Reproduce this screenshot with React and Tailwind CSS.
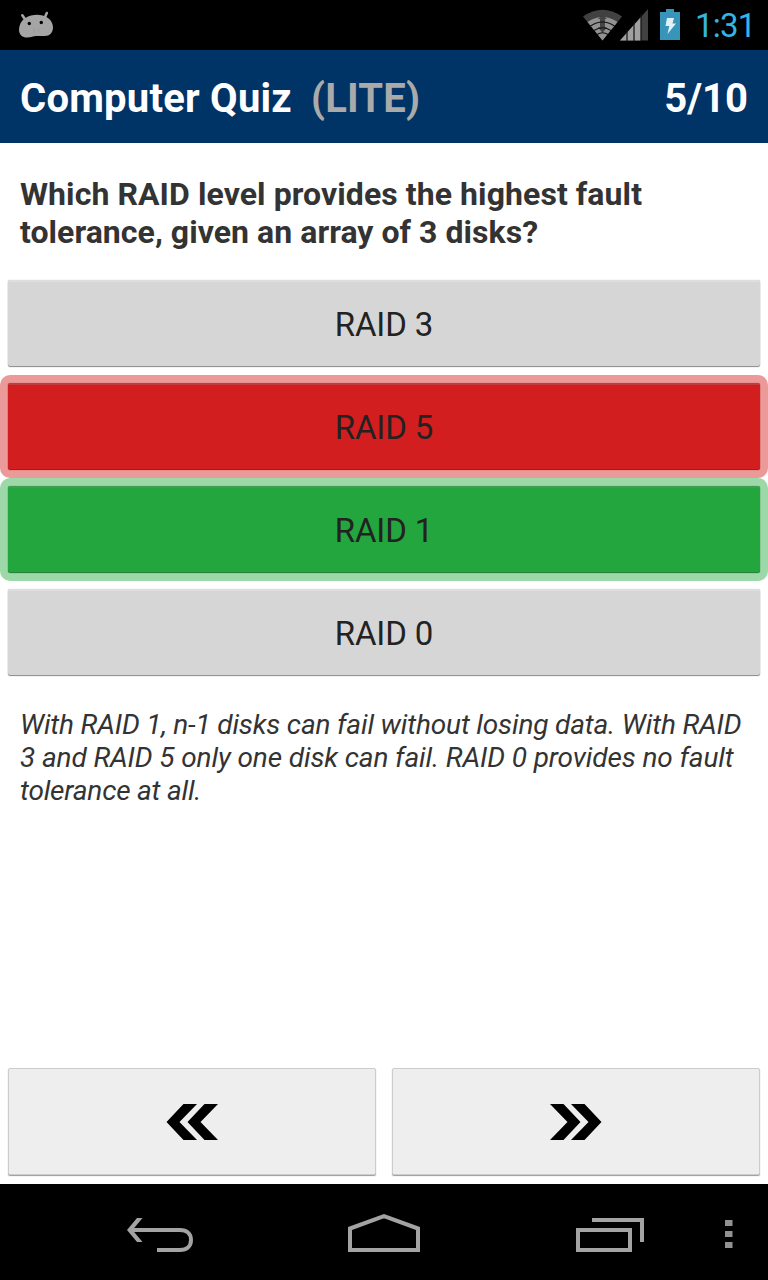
import React from "react";

function StatusBar() {
  return (
    <header className="flex h-[50px] shrink-0 items-start justify-between bg-black">
      <svg className="ml-[18px] mt-[10px]" width="36" height="30" viewBox="18 10 36 30" fill="#a5a5a5">
        <path d="M22.3 15.3 25.5 20M46.8 13 44.6 18" stroke="#a5a5a5" strokeWidth="2.600" strokeLinecap="round" />
        <path d="M25 18.2C29 15.5 33 14.8 37 14.8C41 14.8 44.5 15.6 48 18C51.5 20.5 53 24 53 27.5C53 32.5 49.5 36 45 36H36C33.5 36 31 37.6 27 37.6C22.5 37.6 19 34.5 19 30C19 25 21 21 25 18.2Z" />
        <circle cx="29.3" cy="23.5" r="1.7" fill="#000" />
        <circle cx="41.3" cy="22.5" r="1.7" fill="#000" />
        <path d="M34 28.5v4M38.500 28.500v3" stroke="#999" strokeWidth="1" />
      </svg>
      <div className="flex h-[50px] items-start">
        <svg width="102" height="50" viewBox="582 0 102 50">
          <path d="M583 16.500Q602.500 3 622 16.500L602.500 40.500Z" fill="#414141" />
          <path d="M587.500 22Q602.500 12 617.500 22L602.500 40.500Z" fill="#929292" />
          <path d="M602.500 14.500 607 19H605V27H607L602.500 33 598 27H600V19H598Z" fill="#3d3d3d" opacity=".9" />
          <g fill="none" stroke="#101010" strokeWidth="1.100">
            <path d="M590.500 26Q602.500 18 614.500 26" />
            <path d="M594 30.500Q602.500 25 611 30.500" />
            <path d="M597 34.500Q602.500 31 608 34.500" />
          </g>
          <path d="M620 40.500 648 9V40.500Z" fill="#414141" />
          <path d="M620 40.500 641 17V40.500Z" fill="#a0a0a0" />
          <path d="M627 30v11M634 22v19M641 14v27" stroke="#111" strokeWidth="1.200" />
          <path d="M666 9h8v3h6v28h-20V12h6Z" fill="#3795b9" />
          <path d="M667 18h7l-1.500 5.500h3.500L667.500 34l1.800-8h-3.800Z" fill="#e3f1f6" />
        </svg>
        <span className="ml-[11px] mt-[7px] w-[73px] whitespace-nowrap text-[33px] leading-[38px] tracking-[-0.8px] text-[#33b5e5]">1:31</span>
      </div>
    </header>
  );
}

const frames = {
  plain: "",
  wrong: "bg-[#eb9999]",
  right: "bg-[#9dd8a9]",
};

const faces = {
  plain: "bg-[#d6d6d6] border-t-[#dedede] shadow-[0_1px_1px_#888,0_0_1px_#aaa]",
  wrong: "bg-[#d21e1e] border-t-[#c33c3c] shadow-[0_1px_1px_#8c1717,0_0_1px_#b94444]",
  right: "bg-[#23a63e] border-t-[#429b52] shadow-[0_1px_1px_#1b7730,0_0_1px_#459b53]",
};

function Answer({ label, state = "plain" }) {
  return (
    <div className={`h-[103px] rounded-[10px] px-2 pt-2 pb-2 ${frames[state]}`}>
      <button className={`flex h-[86px] w-full items-center justify-center rounded-[2px] border-t-2 pt-[1px] text-[33px] leading-[38px] tracking-[-0.1px] text-[#222] ${faces[state]}`}>
        <span>{label}</span>
      </button>
    </div>
  );
}

function PagerButton({ label, children }) {
  return (
    <button aria-label={label} className="flex h-[107px] flex-1 items-center justify-center rounded-[2px] border border-[#cccccc] bg-[#eeeeee] shadow-[0_1px_1px_#999]">
      {children}
    </button>
  );
}

export default function App() {
  return (
    <div className="flex h-[1280px] w-[768px] flex-col overflow-hidden bg-white font-['Roboto',sans-serif]">
      <StatusBar />
      <div className="flex h-[93px] shrink-0 items-center justify-between bg-[#003366] px-5 pt-[3px] text-[40px] font-bold leading-[47px] text-white">
        <h1 className="flex whitespace-nowrap">
          <span className="w-[291px] tracking-[0.23px]">Computer Quiz</span>
          <span className="tracking-[0.2px] text-[#aaa]">(LITE)</span>
        </h1>
        <span>5/10</span>
      </div>

      <main className="flex flex-1 flex-col">
        <h2 className="h-[129px] px-5 pt-8 text-[32px] font-bold leading-[38px] tracking-[0.08px] text-[#333]">
          <span className="block whitespace-nowrap">Which RAID level provides the highest fault</span>
          <span className="block whitespace-nowrap tracking-[0.05px]">tolerance, given an array of 3 disks?</span>
        </h2>
        <Answer label="RAID 3" />
        <Answer label="RAID 5" state="wrong" />
        <Answer label="RAID 1" state="right" />
        <Answer label="RAID 0" />
        <p className="px-5 pt-6 text-[28px] italic leading-[33px] text-[#333]">
          <span className="block whitespace-nowrap tracking-[-0.165px]">With RAID 1, n-1 disks can fail without losing data. With RAID</span>
          <span className="block whitespace-nowrap tracking-[-0.12px]">3 and RAID 5 only one disk can fail. RAID 0 provides no fault</span>
          <span className="block whitespace-nowrap tracking-[-0.2px]">tolerance at all.</span>
        </p>
        <div className="mt-auto flex gap-[16px] px-2 pb-[9px]">
          <PagerButton label="Previous">
            <svg width="52" height="38" viewBox="0 0 52 38" fill="#000">
              <path d="M17.500 1H31L13.500 19 31 37H17.500L.500 19ZM38.500 1H52L34.500 19 52 37H38.500L21.500 19Z" />
            </svg>
          </PagerButton>
          <PagerButton label="Next">
            <svg width="52" height="38" viewBox="0 0 52 38" fill="#000">
              <path d="M34.500 1H21L38.500 19 21 37H34.500L51.500 19ZM13.500 1H0L17.500 19 0 37H13.500L30.500 19Z" />
            </svg>
          </PagerButton>
        </div>
      </main>

      <nav className="h-[96px] shrink-0 bg-black">
        <svg width="768" height="96" viewBox="0 1184 768 96" fill="none" stroke="#a3a3a3" strokeWidth="4">
          <path d="M130 1230H180C187 1230 191 1234 191 1240C191 1246 187 1250 180 1250H157" />
          <path d="M137 1218H142.500L132.500 1230 142.500 1242H137L127 1230Z" fill="#a3a3a3" stroke="none" />
          <path d="M350 1228.500V1250H418V1228.500L384 1216.200Z" />
          <path d="M578 1230H630V1250H578ZM592 1220H642V1242" />
          <path d="M725 1220h7.500v6h-7.500ZM725 1231h7.500v6h-7.500ZM725 1242h7.500v6h-7.500Z" fill="#929292" stroke="none" />
        </svg>
      </nav>
    </div>
  );
}
